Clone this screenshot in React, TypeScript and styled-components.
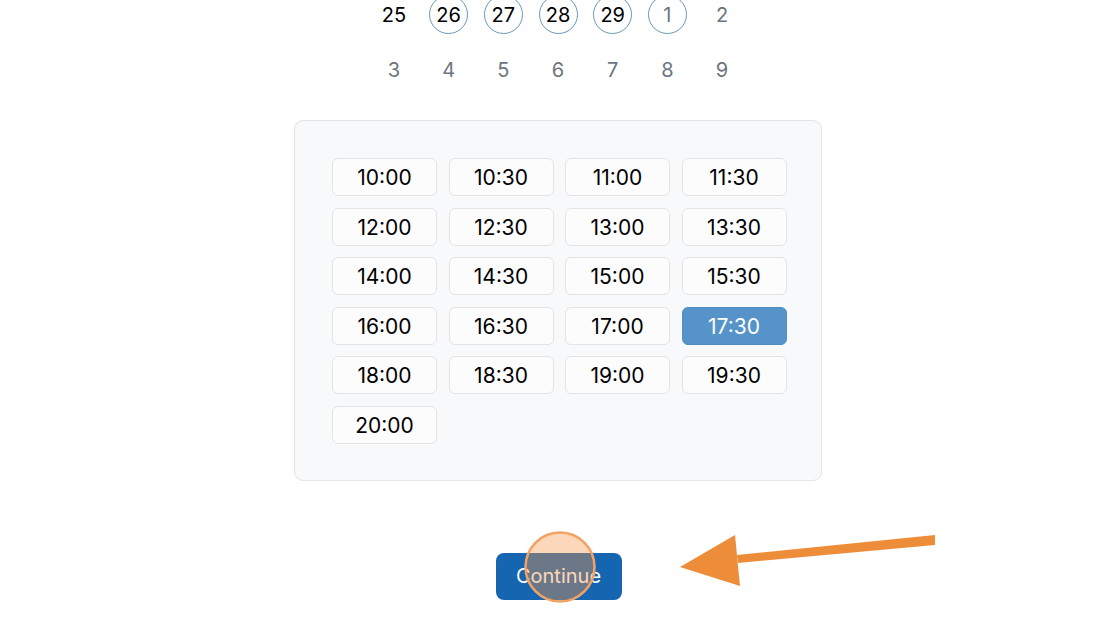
import React from "react";
import styled, { createGlobalStyle } from "styled-components";

const GlobalStyle = createGlobalStyle`
  html, body {
    margin: 0;
    padding: 0;
    background: #ffffff;
    font-family: Inter, "Liberation Sans", Arial, sans-serif;
  }
  #root {
    width: 1120px;
    height: 626px;
    overflow: hidden;
  }
`;

const Page = styled.div`
  position: relative;
  width: 1120px;
  height: 626px;
  display: flex;
  flex-direction: column;
  align-items: center;
  padding-right: 4px;
  box-sizing: border-box;
`;

const Calendar = styled.div`
  margin-top: -5px;
  display: grid;
  grid-template-columns: repeat(7, 54.7px);
  row-gap: 16px;
`;

const Day = styled.div<{ $marked?: boolean; $muted?: boolean }>`
  width: 39px;
  height: 39px;
  justify-self: center;
  box-sizing: border-box;
  border-radius: 50%;
  border: 1.5px solid ${(p) => (p.$marked ? "#6b98b4" : "transparent")};
  display: flex;
  align-items: center;
  justify-content: center;
  font-size: 20px;
  color: ${(p) => (p.$muted ? "#6c757d" : "#000000")};
`;

const Panel = styled.div`
  margin-top: 31px;
  width: 528px;
  box-sizing: border-box;
  padding: 37px 35px 36px 37px;
  background: #f8f9fa;
  border: 1.5px solid #e3e4e6;
  border-radius: 9px;
  display: grid;
  grid-template-columns: repeat(4, 105px);
  column-gap: 11.5px;
  row-gap: 11.5px;
`;

const Slot = styled.div<{ $selected?: boolean }>`
  height: 38px;
  box-sizing: border-box;
  padding-top: 1px;
  border-radius: 6px;
  border: 1.5px solid ${(p) => (p.$selected ? "#4f8fc6" : "#e3e4e6")};
  background: ${(p) => (p.$selected ? "#5593c8" : "#fcfcfd")};
  color: ${(p) => (p.$selected ? "#ffffff" : "#000000")};
  display: flex;
  align-items: center;
  justify-content: center;
  font-size: 21px;
`;

const ContinueButton = styled.button`
  margin-top: 72px;
  margin-left: 1px;
  width: 126px;
  height: 47px;
  border: none;
  border-radius: 8px;
  background: #1565b1;
  color: #ffffff;
  font-family: Inter, "Liberation Sans", Arial, sans-serif;
  font-size: 20px;
  padding: 0;
`;

const Overlay = styled.svg`
  position: absolute;
  left: 0;
  top: 0;
  pointer-events: none;
`;

const row1 = [
  { d: "25" },
  { d: "26", marked: true },
  { d: "27", marked: true },
  { d: "28", marked: true },
  { d: "29", marked: true },
  { d: "1", marked: true, muted: true },
  { d: "2", muted: true },
];
const row2 = ["3", "4", "5", "6", "7", "8", "9"];

const slots = [
  "10:00", "10:30", "11:00", "11:30",
  "12:00", "12:30", "13:00", "13:30",
  "14:00", "14:30", "15:00", "15:30",
  "16:00", "16:30", "17:00", "17:30",
  "18:00", "18:30", "19:00", "19:30",
  "20:00",
];

export default function App() {
  return (
    <>
      <GlobalStyle />
      <Page>
        <Calendar>
          {row1.map((c) => (
            <Day key={c.d} $marked={c.marked} $muted={c.muted}>
              {c.d}
            </Day>
          ))}
          {row2.map((d) => (
            <Day key={d} $muted>
              {d}
            </Day>
          ))}
        </Calendar>

        <Panel>
          {slots.map((t) => (
            <Slot key={t} $selected={t === "17:30"}>
              {t}
            </Slot>
          ))}
        </Panel>

        <ContinueButton>Continue</ContinueButton>

        <Overlay width="1120" height="626" viewBox="0 0 1120 626">
          <circle
            cx="560"
            cy="567"
            r="34.5"
            fill="rgba(249, 150, 70, 0.38)"
            stroke="#f2a263"
            strokeWidth="2.5"
          />
          <polygon points="935,535 935,545 738,563 737,555" fill="#ee8d39" />
          <polygon points="680,567 735,535 740,586" fill="#ee8d39" />
        </Overlay>
      </Page>
    </>
  );
}
